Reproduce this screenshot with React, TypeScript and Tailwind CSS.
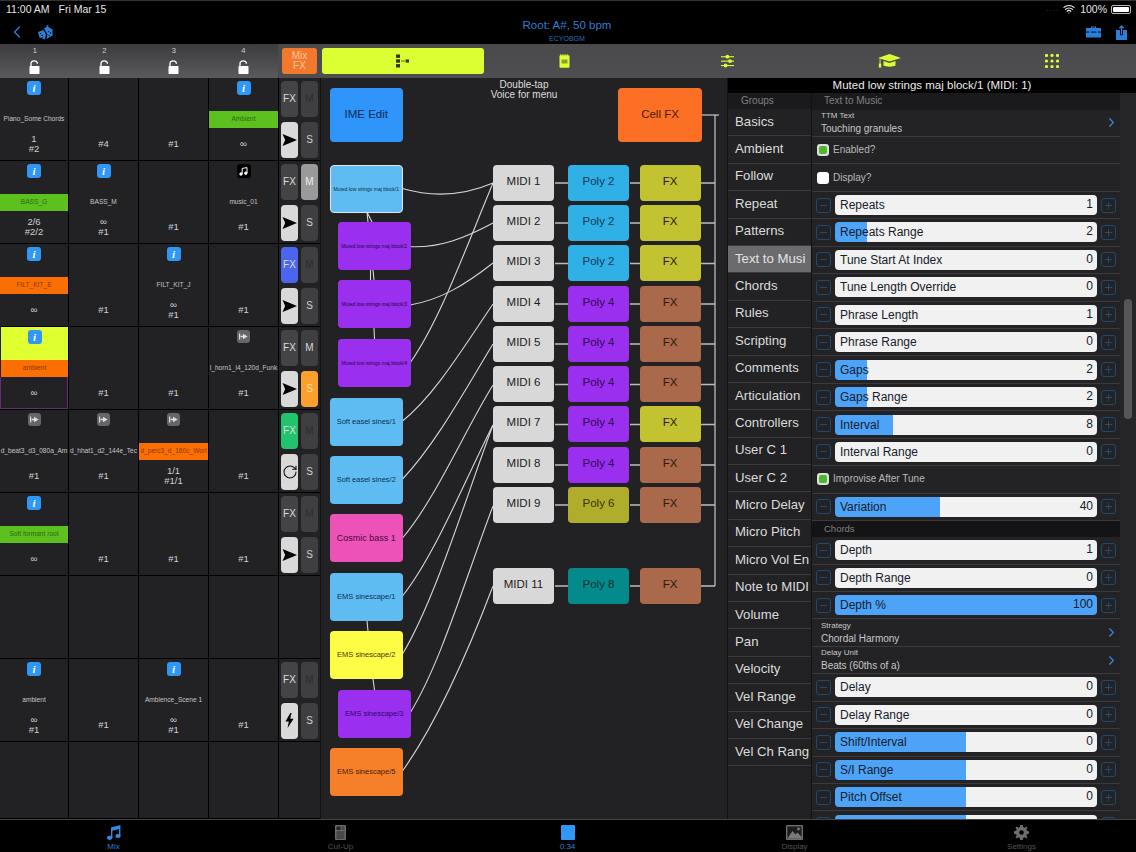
import React from "react";
import { ChevronLeft, ChevronRight, Wifi, RotateCw, Minus, Plus } from "lucide-react";

type Cell = {
  icon?: "info" | "skip" | "music";
  label?: string;
  band?: "green" | "orange";
  lines?: string[];
  selected?: boolean;
};

type Side = {
  fx?: "blue" | "green";
  m?: boolean;
  mBright?: boolean;
  s?: boolean;
  mode?: "arrow" | "loop" | "bolt";
};

const rows: { cells: Cell[]; side?: Side }[] = [
  {
    cells: [
      { icon: "info", label: "Piano_Some Chords", lines: ["1", "#2"] },
      { lines: ["#4"] },
      { lines: ["#1"] },
      { icon: "info", label: "Ambient", band: "green", lines: ["∞"] },
    ],
    side: { mode: "arrow" },
  },
  {
    cells: [
      { icon: "info", label: "BASS_G", band: "green", lines: ["2/6", "#2/2"] },
      { icon: "info", label: "BASS_M", lines: ["∞", "#1"] },
      { lines: ["#1"] },
      { icon: "music", label: "music_01", lines: ["#1"] },
    ],
    side: { m: true, mode: "arrow" },
  },
  {
    cells: [
      { icon: "info", label: "FILT_KIT_E", band: "orange", lines: ["∞"] },
      { lines: ["#1"] },
      { icon: "info", label: "FILT_KIT_J", lines: ["∞", "#1"] },
      { lines: ["#1"] },
    ],
    side: { fx: "blue", mode: "arrow" },
  },
  {
    cells: [
      { icon: "info", label: "ambient", band: "orange", lines: ["∞"], selected: true },
      { lines: ["#1"] },
      { lines: ["#1"] },
      { icon: "skip", label: "l_horn1_l4_120d_Funk", lines: ["#1"] },
    ],
    side: { mBright: true, s: true, mode: "arrow" },
  },
  {
    cells: [
      { icon: "skip", label: "d_beat3_d3_080a_Am", lines: ["#1"] },
      { icon: "skip", label: "d_hhat1_d2_144e_Tec", lines: ["#1"] },
      { icon: "skip", label: "d_perc3_d_160c_Worl", band: "orange", lines: ["1/1", "#1/1"] },
      { lines: ["#1"] },
    ],
    side: { fx: "green", mode: "loop" },
  },
  {
    cells: [
      { icon: "info", label: "Soft formant root", band: "green", lines: ["∞"] },
      { lines: ["#1"] },
      { lines: ["#1"] },
      { lines: ["#1"] },
    ],
    side: { mode: "arrow" },
  },
  { cells: [{}, {}, {}, {}] },
  {
    cells: [
      { icon: "info", label: "ambient", lines: ["∞", "#1"] },
      { lines: ["#1"] },
      { icon: "info", label: "Ambience_Scene 1", lines: ["∞", "#1"] },
      { lines: ["#1"] },
    ],
    side: { mode: "bolt" },
  },
  { cells: [{}, {}, {}, {}] },
];

const Lock = () => (
  <svg width="11" height="14" viewBox="0 0 11 14">
    <path d="M2 7V3.8C2 1.9 3.5 .8 5.2 .8S8.4 1.9 8.4 3.8" fill="none" stroke="#fff" strokeWidth="1.3" />
    <rect x="0.5" y="6" width="10" height="8" rx="0.8" fill="#fff" />
  </svg>
);

const CellIcon = ({ kind }: { kind: "info" | "skip" | "music" }) => {
  if (kind === "info")
    return (
      <div className="w-[14px] h-[14px] rounded-[3px] bg-[#3197f7] flex items-center justify-center text-white text-[11px] leading-none italic font-bold font-['Liberation_Serif',serif]">
        i
      </div>
    );
  if (kind === "skip")
    return (
      <div className="w-[13px] h-[13px] rounded-[3px] bg-[#666668] flex items-center justify-center">
        <svg width="9" height="7" viewBox="0 0 9 7" fill="#dedede">
          <rect x="0" y="0.5" width="1.2" height="6" />
          <path d="M1.6 2.8H4V.8L8.6 3.5 4 6.2V4.2H1.6Z" />
        </svg>
      </div>
    );
  return (
    <div className="w-[14px] h-[14px] rounded-[3px] bg-black flex items-center justify-center">
      <svg width="9" height="9" viewBox="0 0 9 9" fill="none" stroke="#fff" strokeWidth="1">
        <path d="M3.2 7V1.4L8 .6V6" />
        <circle cx="2" cy="7" r="1.2" fill="#fff" />
        <circle cx="6.8" cy="6.2" r="1.2" fill="#fff" />
      </svg>
    </div>
  );
};

const GridCell = ({ cell }: { cell: Cell }) => {
  const bandClass =
    cell.band === "green"
      ? "bg-[#5cc01f] text-[#2f6a12]"
      : cell.band === "orange"
        ? "bg-[#fb6f02] text-[#8a3a06]"
        : "text-[#c4c4c4]";
  return (
    <div className="min-w-0 flex flex-col overflow-hidden border-r border-b border-black">
      <div className={`h-[33px] shrink-0 flex justify-center pt-[3px] ${cell.selected ? "bg-[#dfff30] ml-px" : ""}`}>
        {cell.icon && <CellIcon kind={cell.icon} />}
      </div>
      <div
        className={`h-[17px] shrink-0 flex items-center justify-center pb-[1px] whitespace-nowrap overflow-hidden text-[6.6px] leading-none ${bandClass} ${
          cell.selected ? "ml-px" : ""
        }`}
      >
        {cell.label}
      </div>
      <div
        className={`flex-1 flex flex-col items-center justify-center text-[9.5px] leading-[10px] text-[#d0d0d0] ${
          cell.selected ? "border-l border-r border-b border-[#6b2a78]" : ""
        }`}
      >
        {(cell.lines ?? []).map((l, i) => (
          <div key={i}>{l}</div>
        ))}
      </div>
    </div>
  );
};

const ModeIcon = ({ mode }: { mode: "arrow" | "loop" | "bolt" }) => {
  if (mode === "arrow")
    return (
      <svg width="15" height="12" viewBox="0 0 15 12" fill="#000">
        <path d="M0.5 0 15 6 .5 12 3.2 6Z" />
      </svg>
    );
  if (mode === "loop") return <RotateCw size={16} color="#111" strokeWidth={1.6} />;
  return (
    <svg width="9" height="15" viewBox="0 0 9 15" fill="#000">
      <path d="M5.2 0 0.5 8.4H3.8L2.6 15 8.6 5.8H5.2L6.6 0Z" />
    </svg>
  );
};

const SideCell = ({ side }: { side?: Side }) => (
  <div className="border-b border-black grid grid-cols-2 grid-rows-2 gap-x-[3px] gap-y-[5px] pl-[2px] pr-[2px] pt-[2.5px] pb-[2px] text-[10px] leading-none">
    {side && (
      <>
        <div
          className={`rounded-[4px] flex items-center justify-center text-[#dcdcdc] ${
            side.fx === "blue" ? "bg-[#4a66ef]" : side.fx === "green" ? "bg-[#23c26c]" : "bg-[#444446]"
          }`}
        >
          FX
        </div>
        <div
          className={`rounded-[4px] flex items-center justify-center ${
            side.m ? "bg-[#9a9a9a] text-[#eee]" : "bg-[#3f3f41]"
          } ${side.mBright ? "text-[#d8d8d8]" : side.m ? "" : "text-[#2c2c2e]"}`}
        >
          M
        </div>
        <div className="rounded-[4px] bg-[#d9d9d9] flex items-center justify-center">
          <ModeIcon mode={side.mode ?? "arrow"} />
        </div>
        <div
          className={`rounded-[4px] flex items-center justify-center ${
            side.s ? "bg-[#fba02d] text-[#ffe0b0]" : "bg-[#3f3f41] text-[#d0d0d0]"
          }`}
        >
          S
        </div>
      </>
    )}
  </div>
);

const Y = "#dcff33";

const NetworkIcon = () => (
  <svg width="14" height="14" viewBox="0 0 14 14" fill="#2f3a10">
    <rect x="0" y="0.5" width="4" height="3.4" />
    <rect x="0" y="5.3" width="4" height="3.4" />
    <rect x="0" y="10.1" width="4" height="3.4" />
    <rect x="9.6" y="5.4" width="3.4" height="3.2" />
    <rect x="5" y="6.5" width="4" height="1" fill="#5a6a20" />
  </svg>
);
const NoteIcon = () => (
  <svg width="11" height="14" viewBox="0 0 11 14">
    <rect x="0.5" y="1.2" width="10" height="12.6" rx="1" fill={Y} />
    <path d="M1.5 .2v1.4M3.2 .2v1.4M5 .2v1.4M6.8 .2v1.4M8.5 .2v1.4" stroke={Y} strokeWidth="0.8" />
    <rect x="2.5" y="5.5" width="6" height="4" fill="#8f9a3a" />
  </svg>
);
const SlidersIcon = () => (
  <svg width="13" height="14" viewBox="0 0 13 14" fill={Y}>
    <rect x="0" y="2.2" width="13" height="1.1" />
    <rect x="0" y="6.6" width="13" height="1.1" />
    <rect x="0" y="11" width="13" height="1.1" />
    <circle cx="6.4" cy="2.7" r="1.9" />
    <circle cx="9" cy="7.1" r="1.9" />
    <circle cx="4.6" cy="11.5" r="1.9" />
  </svg>
);
const CapIcon = () => (
  <svg width="23" height="14" viewBox="0 0 23 14" fill={Y}>
    <path d="M11.5 0 23 4 11.5 7.6 0 4Z" />
    <path d="M5.5 7 11.5 9 17.5 7V11.6C15 13 8 13 5.5 11.6Z" />
    <rect x="1.6" y="4.6" width="0.9" height="7" />
    <rect x="0.8" y="9.6" width="2.4" height="4" />
  </svg>
);
const GridIcon = () => (
  <svg width="14" height="14" viewBox="0 0 14 14" fill={Y}>
    {[1.5, 7, 12.5].flatMap((y) =>
      [1.5, 7, 12.5].map((x) => <circle key={`${x}-${y}`} cx={x} cy={y} r="1.6" />),
    )}
  </svg>
);

const voices = [
  { t: "Muted low strings maj block/1", x: 330, y: 165, c: "bg-[#5fbcf3]", s: "text-[5px] text-[#0a2c42]", sel: true },
  { t: "Muted low strings maj block/2", x: 338, y: 222, c: "bg-[#9b2ff0]", s: "text-[5px] text-[#1e0640]" },
  { t: "Muted low strings maj block/3", x: 338, y: 280, c: "bg-[#9b2ff0]", s: "text-[5px] text-[#1e0640]" },
  { t: "Muted low strings maj block/4", x: 338, y: 339, c: "bg-[#9b2ff0]", s: "text-[5px] text-[#1e0640]" },
  { t: "Soft easel sines/1", x: 330, y: 398, c: "bg-[#5fbcf3]", s: "text-[7.5px] text-[#0a3350]" },
  { t: "Soft easel sines/2", x: 330, y: 456, c: "bg-[#5fbcf3]", s: "text-[7.5px] text-[#0a3350]" },
  { t: "Cosmic bass 1", x: 330, y: 514, c: "bg-[#ec52b8]", s: "text-[9px] text-[#4a0a3a]" },
  { t: "EMS sinescape/1", x: 330, y: 573, c: "bg-[#5fbcf3]", s: "text-[7.5px] text-[#0a3350]" },
  { t: "EMS sinescape/2", x: 330, y: 631, c: "bg-[#fdfd45]", s: "text-[7.5px] text-[#40400a]" },
  { t: "EMS sinescape/3", x: 338, y: 690, c: "bg-[#9b2ff0]", s: "text-[7.5px] text-[#30086a]" },
  { t: "EMS sinescape/5", x: 330, y: 748, c: "bg-[#f58029]", s: "text-[7.5px] text-[#4a1c03]" },
];

const FXY = "bg-[#c3c230]";
const FXB = "bg-[#a9694a]";
const midis = [
  { n: "MIDI 1", y: 164.5, p: "Poly 2", pc: "bg-[#2fb0e6] text-[#0e3a50]", f: FXY },
  { n: "MIDI 2", y: 204.5, p: "Poly 2", pc: "bg-[#2fb0e6] text-[#0e3a50]", f: FXY },
  { n: "MIDI 3", y: 245, p: "Poly 2", pc: "bg-[#2fb0e6] text-[#0e3a50]", f: FXY },
  { n: "MIDI 4", y: 285.5, p: "Poly 4", pc: "bg-[#9b2ff0] text-[#2a0a50]", f: FXB },
  { n: "MIDI 5", y: 325.5, p: "Poly 4", pc: "bg-[#9b2ff0] text-[#2a0a50]", f: FXB },
  { n: "MIDI 6", y: 366, p: "Poly 4", pc: "bg-[#9b2ff0] text-[#2a0a50]", f: FXB },
  { n: "MIDI 7", y: 406, p: "Poly 4", pc: "bg-[#9b2ff0] text-[#2a0a50]", f: FXY },
  { n: "MIDI 8", y: 446.5, p: "Poly 4", pc: "bg-[#9b2ff0] text-[#2a0a50]", f: FXB },
  { n: "MIDI 9", y: 486.5, p: "Poly 6", pc: "bg-[#b0ad2c] text-[#35350a]", f: FXB },
  { n: "MIDI 11", y: 567.5, p: "Poly 8", pc: "bg-[#048a8a] text-[#022f2f]", f: FXB },
];

const wires = [
  "M402.5 188.5C435 198 465 195 493 183",
  "M410 246.7C440 248 465 238 493 223",
  "M410 305C440 300 465 285 493 263",
  "M410 363C440 320 465 250 493 183",
  "M402.5 421C435 395 465 345 493 304",
  "M402.5 479C435 445 465 390 493 344",
  "M402.5 538C435 500 465 430 493 385",
  "M402.5 596C435 555 465 480 493 425",
  "M402.5 654C435 600 465 500 493 425",
  "M410 713C440 665 465 580 493 506",
  "M402.5 771C435 725 465 660 493 586",
  "M367 212 368 222M367 212 372 222",
  "M370.5 270 370.5 280M373 270 374 280",
  "M374 328 374.5 339",
  "M367 621 368 631",
  "M373 679 374.5 690",
  "M702 115H719",
  "M715 115V586",
];

const Canvas = () => (
  <div className="relative h-full flex-1 min-w-0 bg-[#222224] border-l border-r border-[#111]">
    <svg
      className="absolute left-[-321px] top-[-78px] pointer-events-none"
      width="1136"
      height="852"
      viewBox="0 0 1136 852"
      fill="none"
      stroke="#d6d6d6"
      strokeWidth="1.1"
    >
      {wires.map((d, i) => (
        <path key={i} d={d} />
      ))}
      {midis.map((m) => (
        <path key={m.n} d={`M555 ${m.y + 18.5}H568M630 ${m.y + 18.5}H640M701 ${m.y + 18.5}H715`} strokeWidth="1.4" stroke="#bdbdbd" />
      ))}
    </svg>
    <div className="absolute left-[130px] top-[2px] w-[146px] text-center text-[10px] leading-[10px] text-[#dedede]">
      Double-tap
      <br />
      Voice for menu
    </div>
    <div className="absolute left-[9px] top-[9.5px] w-[72.5px] h-[54px] rounded-[4px] bg-[#2f95fb] flex items-center justify-center text-[11.5px] text-[#0b2c55]">
      IME Edit
    </div>
    <div className="absolute left-[297px] top-[9.5px] w-[84px] h-[54px] rounded-[4px] bg-[#fb7025] flex items-center justify-center text-[11.5px] text-[#4a1a04]">
      Cell FX
    </div>
    {voices.map((v) => (
      <div
        key={v.t}
        style={{ left: v.x - 321, top: v.y - 78 }}
        className={`absolute w-[72.5px] h-[48px] rounded-[4px] flex items-center justify-center whitespace-nowrap leading-none ${v.c} ${v.s} ${
          v.sel ? "border-[1.5px] border-[#e4e4e4]" : ""
        }`}
      >
        {v.t}
      </div>
    ))}
    {midis.map((m) => (
      <React.Fragment key={m.n}>
        <div
          style={{ left: 172, top: m.y - 78 }}
          className="absolute w-[61px] h-[36px] rounded-[4px] bg-[#d8d8d8] flex items-center justify-center text-[11.5px] text-[#1c1c1c] pb-[2px]"
        >
          {m.n}
        </div>
        <div
          style={{ left: 247, top: m.y - 78 }}
          className={`absolute w-[61px] h-[36px] rounded-[4px] flex items-center justify-center text-[11.5px] pb-[2px] ${m.pc}`}
        >
          {m.p}
        </div>
        <div
          style={{ left: 318.5, top: m.y - 78 }}
          className={`absolute w-[61px] h-[36px] rounded-[4px] flex items-center justify-center text-[11.5px] text-[#2d1a0a] pb-[2px] ${m.f}`}
        >
          FX
        </div>
      </React.Fragment>
    ))}
  </div>
);

const groups = [
  "Basics", "Ambient", "Follow", "Repeat", "Patterns", "Text to Musi", "Chords", "Rules",
  "Scripting", "Comments", "Articulation", "Controllers", "User C 1", "User C 2", "Micro Delay",
  "Micro Pitch", "Micro Vol En", "Note to MIDI", "Volume", "Pan", "Velocity", "Vel Range",
  "Vel Change", "Vel Ch Rang",
];

type Row =
  | { k: "nav"; a: string; b: string }
  | { k: "check"; t: string; on: boolean }
  | { k: "slider"; t: string; v: string; pct?: number }
  | { k: "head"; t: string };

const settings: Row[] = [
  { k: "nav", a: "TTM Text", b: "Touching granules" },
  { k: "check", t: "Enabled?", on: true },
  { k: "check", t: "Display?", on: false },
  { k: "slider", t: "Repeats", v: "1" },
  { k: "slider", t: "Repeats Range", v: "2", pct: 12.4 },
  { k: "slider", t: "Tune Start At Index", v: "0" },
  { k: "slider", t: "Tune Length Override", v: "0" },
  { k: "slider", t: "Phrase Length", v: "1" },
  { k: "slider", t: "Phrase Range", v: "0" },
  { k: "slider", t: "Gaps", v: "2", pct: 12.4 },
  { k: "slider", t: "Gaps Range", v: "2", pct: 12.4 },
  { k: "slider", t: "Interval", v: "8", pct: 22 },
  { k: "slider", t: "Interval Range", v: "0" },
  { k: "check", t: "Improvise After Tune", on: true },
  { k: "slider", t: "Variation", v: "40", pct: 40 },
  { k: "head", t: "Chords" },
  { k: "slider", t: "Depth", v: "1" },
  { k: "slider", t: "Depth Range", v: "0" },
  { k: "slider", t: "Depth %", v: "100", pct: 100 },
  { k: "nav", a: "Strategy", b: "Chordal Harmony" },
  { k: "nav", a: "Delay Unit", b: "Beats (60ths of a)" },
  { k: "slider", t: "Delay", v: "0" },
  { k: "slider", t: "Delay Range", v: "0" },
  { k: "slider", t: "Shift/Interval", v: "0", pct: 50 },
  { k: "slider", t: "S/I Range", v: "0", pct: 50 },
  { k: "slider", t: "Pitch Offset", v: "0", pct: 50 },
  { k: "slider", t: "", v: "", pct: 50 },
];

const StepBtn = ({ plus }: { plus?: boolean }) => (
  <div className="w-[15px] h-[15px] rounded-[3px] border border-[#1d4a72] flex items-center justify-center shrink-0">
    {plus ? <Plus size={11} color="#235c90" strokeWidth={1.5} /> : <Minus size={11} color="#235c90" strokeWidth={1.5} />}
  </div>
);

const SettingRow = ({ row }: { row: Row }) => {
  if (row.k === "head")
    return (
      <div className="h-[16px] shrink-0 bg-[#141416] pl-[12px] flex items-center text-[9.5px] leading-none text-[#808080]">
        {row.t}
      </div>
    );
  const base = "h-[27.45px] shrink-0 border-b border-[#3b3b3d] flex items-center";
  if (row.k === "nav")
    return (
      <div className={`${base} pl-[9px] pr-[1px] justify-between`}>
        <div className="flex flex-col gap-[4px]">
          <div className="text-[8px] leading-[8px] text-[#c8c8c8]">{row.a}</div>
          <div className="text-[10px] leading-[10px] text-[#c8c8c8]">{row.b}</div>
        </div>
        <ChevronRight size={15} color="#3a8ae0" strokeWidth={1.8} />
      </div>
    );
  if (row.k === "check")
    return (
      <div className={`${base} pl-[5px] gap-[4px]`}>
        <div
          className={`w-[12px] h-[12px] rounded-[3px] flex items-center justify-center ${
            row.on ? "bg-[#e0e0e0]" : "bg-white"
          }`}
        >
          {row.on && <div className="w-[8px] h-[8px] rounded-[2px] bg-[#4cb82c]" />}
        </div>
        <span className="text-[10px] leading-none text-[#b8b8b8]">{row.t}</span>
      </div>
    );
  const pct = row.pct ?? 0;
  return (
    <div className={`${base} pl-[4px] pr-[4px] gap-[4px]`}>
      <StepBtn />
      <div
        style={{ background: `linear-gradient(to right,#4da3f7 ${pct}%,#f1f1f1 ${pct}%)` }}
        className="flex-1 h-[20px] rounded-[4px] flex items-center justify-between pl-[5px] pr-[4px] text-[12px] leading-none text-[#16202a]"
      >
        <span>{row.t}</span>
        <span className="pb-[2px]">{row.v}</span>
      </div>
      <StepBtn plus />
    </div>
  );
};

const RightPanel = () => (
  <div className="w-[408px] h-full shrink-0 flex flex-col overflow-hidden bg-[#262628]">
    <div className="h-[15px] shrink-0 bg-black flex items-center justify-center text-[11.5px] leading-none text-[#ececec]">
      Muted low strings maj block/1 (MIDI: 1)
    </div>
    <div className="flex-1 min-h-0 flex">
      <div className="w-[84px] shrink-0 flex flex-col border-r border-[#111] bg-[#222224]">
        <div className="h-[16px] shrink-0 bg-[#1a1a1c] pl-[13px] flex items-center text-[10px] leading-none text-[#808080]">
          Groups
        </div>
        {groups.map((g) => (
          <div
            key={g}
            className={`h-[27.4px] shrink-0 border-b border-[#3b3b3d] pl-[7px] flex items-center pb-[2px] text-[13.2px] leading-none whitespace-nowrap overflow-hidden ${
              g === "Text to Musi" ? "bg-[#6b6b6d] text-[#e4e4e4]" : "text-[#dcdcdc]"
            }`}
          >
            {g}
          </div>
        ))}
      </div>
      <div className="w-[308px] shrink-0 flex flex-col overflow-hidden bg-[#232325]">
        <div className="h-[16.5px] shrink-0 bg-[#1a1a1c] pl-[12px] flex items-center text-[10px] leading-none text-[#808080]">
          Text to Music
        </div>
        {settings.map((r, i) => (
          <SettingRow key={i} row={r} />
        ))}
      </div>
      <div className="flex-1 pl-[3.5px] pt-[206px]">
        <div className="w-[8px] h-[120px] rounded-[4px] bg-[#55555a]" />
      </div>
    </div>
  </div>
);

const Tab = ({ label, active, children }: { label: string; active?: boolean; children: React.ReactNode }) => (
  <div className="flex flex-col items-center pt-[5px] gap-[2px]">
    <div className="h-[15px] flex items-center justify-center">{children}</div>
    <div className={`text-[8px] leading-[9px] ${active ? "text-[#2f7fd0]" : "text-[#555]"}`}>{label}</div>
  </div>
);

export default function App() {
  return (
    <div className="w-[1136px] h-[852px] overflow-hidden flex flex-col bg-black font-['Liberation_Sans',sans-serif]">
      {/* nav bar */}
      <div className="h-[44px] shrink-0 flex flex-col border-t border-[#333]">
        <div className="h-[16px] flex items-center justify-between pl-[6px] pr-[5px] text-[10.5px] leading-none text-[#e6e6e6]">
          <div className="flex gap-[9px]">
            <span>11:00 AM</span>
            <span>Fri Mar 15</span>
          </div>
          <div className="flex items-center">
            <span className="text-[#444] text-[8px] tracking-[1px] mr-[4px]">....</span>
            <Wifi size={12} color="#f0f0f0" strokeWidth={2.4} className="mr-[5px]" />
            <span className="mr-[4px]">100%</span>
            <div className="w-[20px] h-[9px] rounded-[2px] border border-[#bbb] p-[1px]">
              <div className="w-full h-full bg-white rounded-[1px]" />
            </div>
          </div>
        </div>
        <div className="flex-1 flex items-center justify-between pl-[7px] pr-[9px]">
          <div className="flex items-center gap-[11px] w-[200px] pt-[3px]">
            <ChevronLeft size={20} color="#2a80d8" strokeWidth={1.6} />
            <svg width="15" height="15" viewBox="0 0 15 15">
              <path d="M0 7 5.5 5 8 9.5 7 14.5 1.5 12.5Z" fill="#2a80d8" />
              <path d="M6 3.5 9.5 1.5 14.5 4.5 14.6 10.5 8.4 14 9.4 9.2 6.6 4.6Z" fill="#2a80d8" />
              <path d="M8 1 9.5 0 11 1 9.5 2Z" fill="#2a80d8" />
              <g fill="#000">
                <circle cx="2.6" cy="8.6" r="0.7" />
                <circle cx="4.2" cy="10.4" r="0.7" />
                <circle cx="4.2" cy="12.6" r="0.7" />
                <circle cx="10.6" cy="6.6" r="0.7" />
                <circle cx="12.6" cy="8" r="0.7" />
                <circle cx="11.2" cy="10.6" r="0.7" />
              </g>
            </svg>
          </div>
          <div className="flex flex-col items-center mr-[36px]">
            <div className="text-[11.5px] leading-[14px] text-[#2c7fd2]">Root: A#, 50 bpm</div>
            <div className="text-[7px] leading-[9px] mt-[2px] text-[#2c6fb5]">ECYOBGM</div>
          </div>
          <div className="flex items-center justify-end gap-[15px] w-[164px] pt-[3px]">
            <svg width="15" height="12" viewBox="0 0 15 12" fill="#2a80d8">
              <path d="M5 2V.6H10V2H15V11.4H0V2ZM6 2H9V1.4H6Z" fillRule="evenodd" />
              <rect x="0" y="5.6" width="15" height="0.9" fill="#000" />
              <rect x="3" y="5" width="1.6" height="2" />
              <rect x="10.4" y="5" width="1.6" height="2" />
            </svg>
            <svg width="11" height="15" viewBox="0 0 11 15" fill="#2a80d8">
              <path d="M5.5 0 8.6 3.2H6.1V9.5H4.9V3.2H2.4Z" />
              <path d="M0 5H4V10.2H7V5H11V15H0Z" />
            </svg>
          </div>
        </div>
      </div>

      {/* toolbar */}
      <div className="h-[34px] shrink-0 flex bg-gradient-to-b from-[#4a4a4c] to-[#4e4e50]">
        <div className="w-[278px] shrink-0 grid grid-cols-4 bg-gradient-to-b from-[#3c3c3e] to-[#5a5a5c]">
          {["1", "2", "3", "4"].map((n) => (
            <div key={n} className="flex flex-col items-center pt-[3px] gap-[5px] text-[7.5px] leading-[8px] text-[#cfcfcf]">
              {n}
              <Lock />
            </div>
          ))}
        </div>
        <div className="flex items-center pl-[4px] pr-[4.5px]">
          <div className="w-[35px] h-[26px] rounded-[3px] bg-[#f4782b] flex items-center justify-center text-center text-[10px] leading-[10px] text-[#ffc69e]">
            Mix
            <br />
            FX
          </div>
        </div>
        <div className="flex-1 grid grid-cols-5 items-center pr-[3px]">
          <div className="h-[26px] rounded-[3px] bg-[#dcff33] flex items-center justify-center">
            <NetworkIcon />
          </div>
          <div className="flex justify-center"><NoteIcon /></div>
          <div className="flex justify-center"><SlidersIcon /></div>
          <div className="flex justify-center"><CapIcon /></div>
          <div className="flex justify-center"><GridIcon /></div>
        </div>
      </div>

      {/* body */}
      <div className="h-[741px] shrink-0 flex overflow-hidden text-white">
        <div className="w-[320px] shrink-0 h-full grid grid-rows-[repeat(8,83px)_1fr] grid-cols-[69px_70px_70px_70px_41px] bg-[#222224]">
          {rows.map((r, ri) => (
            <React.Fragment key={ri}>
              {r.cells.map((c, ci) => (
                <GridCell key={ci} cell={c} />
              ))}
              <SideCell side={r.side} />
            </React.Fragment>
          ))}
        </div>
        <Canvas />
        <RightPanel />
      </div>

      {/* tab bar */}
      <div className="flex-1 grid grid-cols-5 pr-px border-t border-[#444] bg-black">
        <Tab label="Mix" active>
          <svg width="14" height="15" viewBox="0 0 14 15" fill="#2f8be6">
            <path d="M4 2.6 13.4 0V11H12V4L5.4 5.8V13H4Z" />
            <ellipse cx="2.7" cy="12.8" rx="2.7" ry="2.1" />
            <ellipse cx="11" cy="11" rx="2.6" ry="2.1" />
          </svg>
        </Tab>
        <Tab label="Cut-Up">
          <svg width="11" height="15" viewBox="0 0 11 15">
            <rect width="11" height="15" rx="1" fill="#6a6a6a" />
            <rect x="1.5" y="1.5" width="4" height="3.5" fill="#222" />
            <path d="M6.5 2H9.5M6.5 4H9.5M1.5 7H9.5M1.5 9H9.5M1.5 11H9.5M1.5 13H9.5" stroke="#222" strokeWidth="0.9" />
          </svg>
        </Tab>
        <Tab label="0:34" active>
          <div className="w-[14px] h-[15px] rounded-[1px] bg-[#3197f7]" />
        </Tab>
        <Tab label="Display">
          <svg width="17" height="15" viewBox="0 0 17 15">
            <rect width="17" height="15" rx="1" fill="#6e6e6e" />
            <rect x="1.4" y="1.4" width="14.2" height="12" fill="#1c1c1c" />
            <path d="M1.4 13.4 6.5 6 9.5 9.5 11.5 7.5 15.6 12V13.4Z" fill="#7a7a7a" />
            <circle cx="12.5" cy="4" r="1.4" fill="#7a7a7a" />
          </svg>
        </Tab>
        <Tab label="Settings">
          <svg width="15" height="15" viewBox="0 0 15 15" fill="#6e6e6e">
            <path
              fillRule="evenodd"
              d="M6.2 0H8.8L9.2 2.1 10.6 2.7 12.4 1.5 13.5 2.6 12.3 4.4 12.9 5.8 15 6.2V8.8L12.9 9.2 12.3 10.6 13.5 12.4 12.4 13.5 10.6 12.3 9.2 12.9 8.8 15H6.2L5.8 12.9 4.4 12.3 2.6 13.5 1.5 12.4 2.7 10.6 2.1 9.2 0 8.8V6.2L2.1 5.8 2.7 4.4 1.5 2.6 2.6 1.5 4.4 2.7 5.8 2.1ZM7.5 5.2A2.3 2.3 0 1 0 7.5 9.8 2.3 2.3 0 1 0 7.5 5.2Z"
            />
          </svg>
        </Tab>
      </div>
    </div>
  );
}
